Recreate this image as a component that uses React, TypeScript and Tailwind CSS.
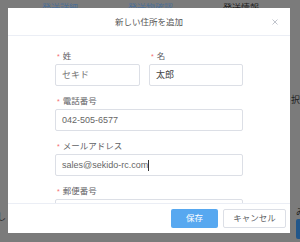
import React from "react";

const font = { fontFamily: '"Liberation Sans", "Noto Sans CJK JP", sans-serif' };

function Label({ text }: { text: string }) {
  return (
    <div className="h-[12px] flex items-center pl-[2px] text-[8.5px] text-[#5f6266] leading-none">
      <span className="text-[#f56c6c] text-[7px] mr-[3px]">*</span>
      <span>{text}</span>
    </div>
  );
}

function Input({ value, w, color = "#606266", caret = false }: { value: string; w: string; color?: string; caret?: boolean }) {
  return (
    <div className={`${w} h-[22px] border border-[#dcdfe6] rounded-[2px] flex items-center pl-[6px] text-[9px] leading-none`} style={{ color }}>
      <span>{value}</span>
      {caret && <span className="inline-block w-[1px] h-[11px] bg-[#333]" />}
    </div>
  );
}

export default function App() {
  return (
    <div className="relative w-[300px] h-[242px] bg-[#7b7b7b] overflow-hidden" style={font}>
      {/* dimmed page behind */}
      <div className="w-full h-full flex flex-col">
        <div className="h-[8px] overflow-hidden flex items-end text-[9px] leading-[10px]">
          <div className="flex gap-[50px] pl-[42px] translate-y-[5px]">
            <span className="text-[#4d6f96]">発送詳細</span>
            <span className="text-[#4d6f96]">発送物確認</span>
            <span className="text-[#1e1e1e]">発送情報</span>
          </div>
        </div>
        <div className="flex-1 flex justify-between">
          <div className="w-[8px] overflow-hidden flex flex-col justify-end pb-[10px] text-[9px] leading-[10px] text-[#222]">
            <span className="-ml-[3px]">し</span>
            <span className="-ml-[3px]">(</span>
          </div>
          <div className="w-[10px] overflow-hidden flex flex-col text-[9px] leading-[10px] text-[#222]">
            <span className="mt-[87px] ml-[1px]">択</span>
            <span className="mt-[102px] ml-[6px]">み</span>
            <div className="mt-[2px] ml-[6px] w-[10px] h-[20px] bg-[#23578a] rounded-[2px]" />
          </div>
        </div>
      </div>

      {/* dialog */}
      <div className="absolute left-[8px] top-[8px] w-[282px] h-[225px] bg-white flex flex-col">
        <div className="relative h-[28px] border-b border-[#ebeef5] flex items-center justify-center">
          <span className="text-[8.5px] text-[#555] leading-none mt-[1px]">新しい住所を追加</span>
          <svg className="absolute right-[12px] top-[11px]" width="6" height="6" viewBox="0 0 6 6">
            <path d="M0.5 0.5 L5.5 5.5 M5.5 0.5 L0.5 5.5" stroke="#c0c4cc" strokeWidth="1" />
          </svg>
        </div>
        <div className="flex-1 overflow-hidden pl-[47px] pt-[14px] flex flex-col gap-[9px]">
          <div className="flex gap-[9px]">
            <div className="flex flex-col gap-[2px]">
              <Label text="姓" />
              <Input value="セキド" w="w-[85px]" color="#777" />
            </div>
            <div className="flex flex-col gap-[2px]">
              <Label text="名" />
              <Input value="太郎" w="w-[94px]" color="#444" />
            </div>
          </div>
          <div className="flex flex-col gap-[2px]">
            <Label text="電話番号" />
            <Input value="042-505-6577" w="w-[188px]" color="#666" />
          </div>
          <div className="flex flex-col gap-[2px]">
            <Label text="メールアドレス" />
            <Input value="sales@sekido-rc.com" w="w-[188px]" color="#666" caret />
          </div>
          <div className="flex flex-col gap-[2px]">
            <Label text="郵便番号" />
            <Input value="" w="w-[188px]" />
          </div>
        </div>
        <div className="h-[30px] border-t border-[#ebeef5] flex items-center justify-end gap-[5px] pr-[4px]">
          <button className="w-[47px] h-[19px] bg-[#57a8f0] text-white text-[8.5px] rounded-[2px] leading-none">保存</button>
          <button className="w-[63px] h-[19px] bg-white border border-[#dcdfe6] text-[#606266] text-[8.5px] rounded-[2px] leading-none">キャンセル</button>
        </div>
      </div>
    </div>
  );
}
